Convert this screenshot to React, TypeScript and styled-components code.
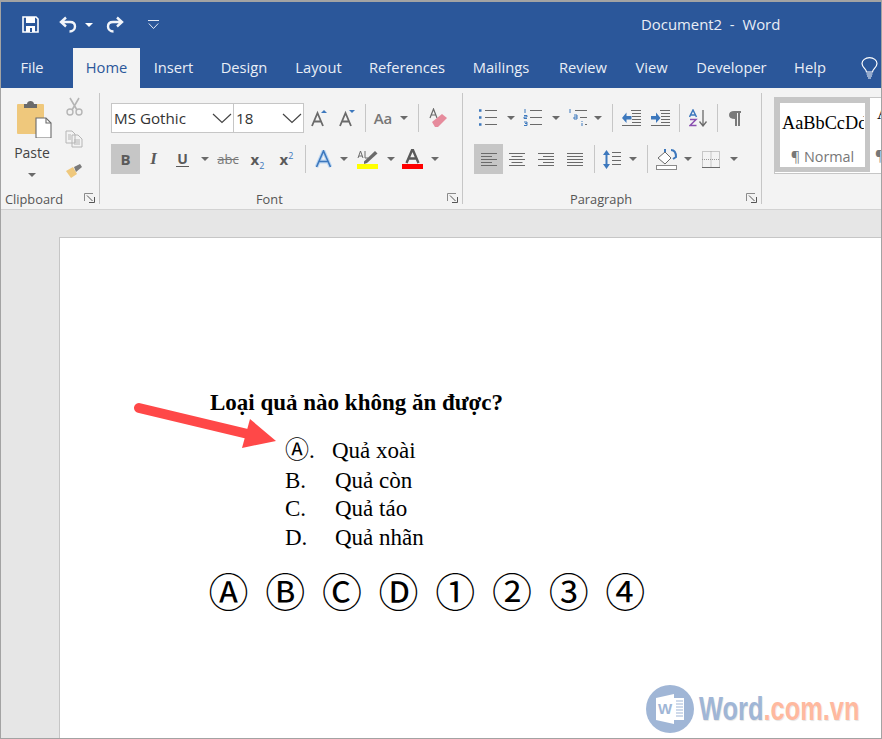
import React from "react";
import styled, { createGlobalStyle } from "styled-components";

const Global = createGlobalStyle`
  html, body { margin: 0; padding: 0; background: #e6e6e6; }
  * { box-sizing: border-box; }
  #root { width: 882px; height: 739px; overflow: hidden; }
`;
const UI = `"Open Sans", "Noto Sans", sans-serif`;

const Window = styled.div`
  width: 882px; height: 739px; display: flex; flex-direction: column;
  border: 1px solid #a3a3a3; border-top-width: 2px; font-family: ${UI}; overflow: hidden; background: #e6e6e6;
`;
const TitleBar = styled.div`
  height: 46px; background: #2b579a; display: flex; align-items: center; color: #fff; padding-left: 21px; flex: none;
`;
const QuickSlot = styled.div<{ $w: number }>`
  width: ${p => p.$w}px; display: flex; align-items: center; height: 20px; margin-top: -1px;
`;
const DocTitle = styled.div`
  margin-left: 482px; font-size: 14.9px; color: #e9eef6; white-space: pre; margin-top: -2px;
`;
const TabBar = styled.div`
  height: 40px; background: #2b579a; display: flex; flex: none;
`;
const Tab = styled.div<{ $active?: boolean; $w: number; $pr?: number }>`
  width: ${p => p.$w}px; height: 40px; display: flex; align-items: center; justify-content: center; font-size: 14.7px; padding: 0 ${p => p.$pr ?? 0}px 3px 0;
  color: ${p => (p.$active ? "#2b579a" : "#e9eef6")};
  background: ${p => (p.$active ? "#f3f3f3" : "transparent")};
`;
const BulbSlot = styled.div`
  margin-left: 19px; width: 24px; display: flex; align-items: center; justify-content: center;
`;
const Ribbon = styled.div`
  height: 122px; background: #f3f3f3; border-bottom: 1px solid #d2d2d2; display: flex; flex: none; overflow: hidden; padding: 5px 0;
`;
const Group = styled.div<{ $w: number; $pl: number; $last?: boolean }>`
  width: ${p => p.$w}px; padding-left: ${p => p.$pl}px; flex: none; display: flex; flex-direction: column; position: relative;
  border-right: ${p => (p.$last ? "none" : "1px solid #c6c6c6")};
`;
const Rows = styled.div`
  height: 95px; padding-top: 10px; display: flex; flex-direction: column; gap: 11px; flex: none;
`;
const Row = styled.div`
  display: flex; height: 30px; align-items: center;
`;
const Slot = styled.div<{ $w: number; $active?: boolean }>`
  width: ${p => p.$w}px; height: 30px; flex: none; display: flex; align-items: center; justify-content: center; color: #5a5a5a;
  background: ${p => (p.$active ? "#c6c6c6" : "transparent")};
`;
const Sep = styled.div`
  width: 1px; height: 28px; background: #c6c6c6; flex: none;
`;
const Caret = styled.i`
  display: block; width: 0; height: 0; border: 4px solid transparent; border-top: 4px solid #6a6a6a; border-bottom: none; flex: none;
`;
const Combo = styled.div<{ $w: number }>`
  width: ${p => p.$w}px; height: 30px; background: #fff; border: 1px solid #c6c6c6; display: flex; align-items: center; justify-content: space-between;
  font-size: 15.2px; color: #333; padding: 0 1px 0 2px; flex: none; margin-right: -1px;
`;
const BoldGlyph = styled.span`
  font: bold 15px ${UI}; color: #5a5a5a;
`;
const ItalicGlyph = styled.span`
  font: italic bold 17px "Liberation Serif", serif; color: #5a5a5a;
`;
const UnderGlyph = styled.span`
  font: bold 14px ${UI}; color: #5a5a5a; border-bottom: 1.5px solid #5a5a5a; line-height: 15px; padding: 0 1px;
`;
const StrikeGlyph = styled.span`
  font: 13px ${UI}; color: #777; text-decoration: line-through;
`;
const ScriptGlyph = styled.span`
  font: bold 15px ${UI}; color: #5a5a5a;
  sub, sup { font-size: 9px; font-weight: 400; color: #3d78bd; line-height: 0; }
`;
const CaseGlyph = styled.span`
  font: 600 15px ${UI}; color: #777;
`;
const Label = styled.div<{ $pl: number }>`
  height: 21px; display: flex; align-items: center; font-size: 12.8px; color: #555; padding-left: ${p => p.$pl}px; flex: none;
`;
const Launcher = styled.span`
  position: absolute; right: 4px; bottom: 1px; display: flex;
`;
const ClipGrid = styled.div`
  height: 95px; display: flex; flex: none;
`;
const PasteCol = styled.div`
  width: 62px; display: flex; flex-direction: column; align-items: center; padding-top: 7px; color: #444; font-size: 14px;
`;
const PasteIconBox = styled.div`
  margin-left: 5px; height: 38px;
`;
const PasteText = styled.div`
  margin-top: 5px; line-height: 20px;
`;
const PasteCaret = styled.div`
  margin-top: 10px;
`;
const SmallCol = styled.div`
  width: 20px; margin-left: 1px; display: flex; flex-direction: column; align-items: center; padding-top: 4px; gap: 14px;
`;
const StyleGallery = styled.div`
  margin-top: 4px; height: 77px; width: 130px; background: #fff; border: 1px solid #c6c6c6; display: flex; border-right: none;
`;
const StyleCard = styled.div`
  width: 95px; height: 74px; border: 5px solid #c6c6c6; background: #fff; overflow: hidden; flex: none; display: flex; flex-direction: column; align-items: center;
`;
const StyleSample = styled.div`
  font: 18.3px "Liberation Serif", serif; color: #000; white-space: nowrap; height: 45px; line-height: 40px; width: 83px; overflow: hidden; padding-left: 1px;
`;
const StyleName = styled.div`
  font-size: 14.4px; color: #777; white-space: nowrap; line-height: 18px;
`;
const NextStyle = styled.div`
  padding: 6px 0 0 7px; display: flex; flex-direction: column; font-family: "Liberation Serif", serif; font-size: 17px; color: #000; overflow: hidden; width: 30px;
`;
const NextMark = styled.div`
  color: #777; font: 14px ${UI}; margin-top: 22px; margin-left: -2px;
`;
const DocArea = styled.div`
  flex: 1; min-height: 0; padding: 27px 0 0 58px; background: #e6e6e6;
`;
const Page = styled.div`
  height: 100%; background: #fff; border: 1px solid #c6c6c6; border-right: none; border-bottom: none; position: relative; padding: 150px 0 0 150px;
  font-family: "Liberation Serif", serif; color: #000;
`;
const Question = styled.div`
  font-weight: 700; font-size: 23px; line-height: 30px; height: 47px; white-space: nowrap;
`;
const Options = styled.div`
  margin-left: 75px; font-size: 23px; display: flex; flex-direction: column;
`;
const Option = styled.div<{ $h: number }>`
  height: ${p => p.$h}px; line-height: ${p => p.$h}px; display: flex; white-space: nowrap;
`;
const OptLabel = styled.span<{ $w: number }>`
  width: ${p => p.$w}px; flex: none;
`;
const Circled = styled.span`
  font-family: "Noto Sans CJK JP", sans-serif; font-size: 24px; line-height: 24px;
`;
const Symbols = styled.div`
  margin-top: 18px; display: flex; gap: 19.7px; font-family: "Noto Sans CJK JP", sans-serif; font-size: 40px; line-height: 40px;
`;
const Symbol = styled.span`
  width: 37px; display: flex; justify-content: center; flex: none;
`;
const ArrowSvg = styled.svg`
  position: absolute; left: 73px; top: 162px;
`;
const Watermark = styled.div`
  position: absolute; right: 22px; bottom: 5px; display: flex; align-items: center; gap: 5px;
`;
const Brand = styled.div`
  font: bold 33px "Liberation Sans", sans-serif; white-space: nowrap; transform: scaleX(.77); transform-origin: left center; width: 160px; text-shadow: 1px 1px 1px #e4e4e4;
`;
const BrandBlue = styled.span`
  color: #a0b6d6;
`;
const BrandOrange = styled.span`
  color: #ffb99f;
`;

const Save = () => (
  <svg width="17" height="17" viewBox="0 0 17 17"><path d="M1 1h13l2 2v13H1z" fill="none" stroke="#fff" strokeWidth="1.6" /><rect x="4" y="1" width="9" height="6" fill="#fff" /><rect x="4" y="10" width="9" height="6" fill="#fff" /><rect x="8" y="12" width="2" height="4" fill="#2b579a" /></svg>
);
const Undo = ({ flip }: { flip?: boolean }) => (
  <svg width="18" height="17" viewBox="0 0 18 17" style={flip ? { transform: "scaleX(-1)" } : undefined}><path d="M7 1.500 2 6l5 4.500M2.500 6H11c3.500 0 5 2 5 4.500S14 15.500 10.500 15.500" fill="none" stroke="#f2f5fa" strokeWidth="2.400" /></svg>
);
const QuickCaret = () => <svg width="8" height="4" viewBox="0 0 8 4"><path d="M0 0h8L4 4z" fill="#fff" /></svg>;
const Customize = () => (
  <svg width="11" height="9" viewBox="0 0 11 9"><path d="M0 .5h11M.8 3.500l4.700 5 4.700-5" fill="none" stroke="#e3e9f3" strokeWidth="1" /></svg>
);
const Bulb = () => (
  <svg width="17" height="22" viewBox="0 0 17 22"><path d="M5.500 15c0-3-4.500-4.500-4.500-8.500a7.500 5.800 0 0 1 15 0c0 4-4.500 5.500-4.500 8.500z" fill="none" stroke="#fff" strokeWidth="1.200" /><path d="M5.500 17h6M6 19h5M7 21h3" stroke="#fff" strokeWidth="1.200" /></svg>
);
const PasteIcon = () => (
  <svg width="35" height="38" viewBox="0 0 35 38">
    <rect x="0" y="4" width="27" height="30" rx="1" fill="#efc87c" />
    <path d="M7 4h3c0-4 7-4 7 0h3v4H7z" fill="#6a6a6a" />
    <path d="M19 18h10l5 5v15H19z" fill="#fff" stroke="#6a6a6a" strokeWidth="1.100" />
    <path d="M29 18v5h5" fill="none" stroke="#6a6a6a" strokeWidth="1.100" />
  </svg>
);
const Cut = () => (
  <svg width="17" height="19" viewBox="0 0 17 19"><path d="M4 1l7 12M13 1L6 13" stroke="#b5b5b5" strokeWidth="1.600" fill="none" /><circle cx="4" cy="15" r="3" fill="none" stroke="#b5b5b5" strokeWidth="1.400" /><circle cx="13" cy="15" r="3" fill="none" stroke="#b5b5b5" strokeWidth="1.400" /></svg>
);
const Copy = () => (
  <svg width="18" height="18" viewBox="0 0 18 18"><path d="M1 1h6l3 3v9H1zM7 5h6l4 4v8H7z" fill="#f3f3f3" stroke="#b5b5b5" /><path d="M3 5h3M3 7h3M3 9h3M9 10h6M9 12h6M9 14h6" stroke="#b5b5b5" /></svg>
);
const Painter = () => (
  <svg width="19" height="17" viewBox="0 0 19 17"><path d="M1 9l7-4 4 7-6 4z" fill="#efc87c" /><path d="M9 5l6-3 2 3-6 5z" fill="#7a7a7a" /></svg>
);
const Launch = () => (
  <svg width="11" height="10" viewBox="0 0 11 10"><path d="M.5 8V.5H9" fill="none" stroke="#8a8a8a" /><path d="M3 2.500l5.500 5.500M5 9.500h5.500V4" fill="none" stroke="#555" /></svg>
);
const Chevron = () => (
  <svg width="20" height="11" viewBox="0 0 20 11"><path d="M1 1l9 8.500L19 1" fill="none" stroke="#444" strokeWidth="1.200" /></svg>
);
const SizeA = ({ down }: { down?: boolean }) => (
  <svg width="17" height="18" viewBox="0 0 17 18"><path d="M1 17 6.500 4 12 17M3 12.500h7" fill="none" stroke="#6a6a6a" strokeWidth="1.800" />{down ? <path d="M10 1h6l-3 3z" fill="#3d78bd" /> : <path d="M10 4h6l-3-3z" fill="#3d78bd" />}</svg>
);
const Eraser = () => (
  <svg width="19" height="20" viewBox="0 0 19 20"><path d="M1 10 4.500 1 8 10M2.500 7h4" fill="none" stroke="#6a6a6a" strokeWidth="1.200" /><path d="M3 14l10-8 5 4-9 9H6z" fill="#e68b9c" /></svg>
);
const TextEffect = () => (
  <svg width="17" height="18" viewBox="0 0 17 18"><path d="M1.500 17 8.500 1l7 16M4.500 11.500h8" fill="none" stroke="#bcd6f2" strokeWidth="3.800" /><path d="M1.500 17 8.500 1l7 16M4.500 11.500h8" fill="none" stroke="#3d78bd" strokeWidth="1.600" /></svg>
);
const Highlight = () => (
  <svg width="21" height="20" viewBox="0 0 21 20"><path d="M1 9 3.500 2 6 9M2 7h3" fill="none" stroke="#6a6a6a" strokeWidth="1" /><path d="M8 2v7h3" fill="none" stroke="#6a6a6a" /><path d="M7 12.500 18 2l2.500 2.500L10 14l-3 1z" fill="#6a6a6a" /><rect x="0" y="15" width="21" height="5" fill="#ffff00" /></svg>
);
const FontColor = () => (
  <svg width="21" height="20" viewBox="0 0 21 20"><path d="M4.500 14 10.500 0 16.500 14M6.500 9.500h8" fill="none" stroke="#5a5a5a" strokeWidth="2.400" /><rect x="0" y="15" width="21" height="5" fill="#ff0000" /></svg>
);
const ListIcon = ({ kind }: { kind: "bullet" | "num" | "multi" }) => (
  <svg width="20" height="18" viewBox="0 0 20 18">
    {kind === "bullet" && <path d="M1 1.500h2.500M1 8.500h2.500M1 15.500h2.500" stroke="#3d78bd" strokeWidth="2.500" />}
    {kind === "num" && <path d="M2 0v4M1 6.500h3v1.500H1v1.500h3M1 13h3v1.500H2 4V16.500H1" stroke="#3d78bd" strokeWidth="1" fill="none" />}
    {kind === "multi" && <path d="M2 0v4M6 6h3v4H6v-2h3M14 12v1M14 14v3" stroke="#3d78bd" strokeWidth="1" fill="none" />}
    {kind === "multi" ? <path d="M7 1.500h12M12 8.500h7M17 15.500h2" stroke="#6a6a6a" /> : <path d="M7 1.500h12M7 8.500h12M7 15.500h12" stroke="#6a6a6a" />}
  </svg>
);
const Indent = ({ inc }: { inc?: boolean }) => (
  <svg width="19" height="16" viewBox="0 0 19 16"><path d="M9 .5h10M10 3.500h9M10 6.500h9M10 9.500h9M10 12.500h9M0 15.500h19" stroke="#6a6a6a" /><path d={inc ? "M0 6h5V2.500L9.500 8 5 13V9.500H0z" : "M9.500 6h-5V2.500L0 8l4.500 5V9.500h5z"} fill="#3d78bd" /></svg>
);
const Sort = () => (
  <svg width="19" height="18" viewBox="0 0 19 18"><path d="M.5 8 4 1l3.500 7M2 6h4" fill="none" stroke="#3d78bd" strokeWidth="1.500" /><path d="M1 10.500h6L1 16.500h6.500" fill="none" stroke="#8a4fb0" strokeWidth="1.500" /><path d="M14 1v15M10.500 12.500 14 17l3.500-4.500" fill="none" stroke="#6a6a6a" strokeWidth="1.300" /></svg>
);
const Pilcrow = () => (
  <svg width="12" height="15" viewBox="0 0 12 15"><path d="M5 0h7v2h-1v13H9V2H8v13H6V8C2 8 0 6.500 0 4s2-4 5-4z" fill="#7a7a7a" /></svg>
);
const Align = ({ mode }: { mode: "left" | "center" | "right" | "justify" }) => {
  const short = mode === "justify" ? 16 : 11;
  const x = (w: number) => (mode === "center" ? (16 - w) / 2 : mode === "right" ? 16 - w : 0);
  return (
    <svg width="16" height="13" viewBox="0 0 16 13">
      {[0, 1, 2, 3, 4].map(i => {
        const w = i % 2 === 0 ? 16 : short;
        return <path key={i} d={`M${x(w)} ${i * 3 + 0.5}h${w}`} stroke="#6a6a6a" />;
      })}
    </svg>
  );
};
const LineSpacing = () => (
  <svg width="18" height="19" viewBox="0 0 18 19"><path d="M3.500 3v13" stroke="#3d78bd" strokeWidth="2" /><path d="M0 5 3.500 0 7 5zM0 14l3.500 5L7 14z" fill="#3d78bd" /><path d="M9 2.500h9M9 6.500h9M9 10.500h9M9 14.500h9" stroke="#6a6a6a" /></svg>
);
const Shading = () => (
  <svg width="22" height="21" viewBox="0 0 22 21"><path d="M2 9 9 3l6 6-6 6z" fill="#fff" stroke="#6a6a6a" /><path d="M9 3V0M15 1c4 0 5 3 5 7l-3 2" fill="none" stroke="#3d78bd" strokeWidth="2" /><rect x=".5" y="16.500" width="20" height="4" fill="#fff" stroke="#8a8a8a" /></svg>
);
const Borders = () => (
  <svg width="18" height="17" viewBox="0 0 18 17"><path d="M.5.500h17v16H.500z" fill="none" stroke="#9a9a9a" strokeDasharray="1 1" /><path d="M9 .500v16M0 8.500h18" stroke="#9a9a9a" strokeDasharray="1 1" /><path d="M0 16.500h18" stroke="#6a6a6a" /></svg>
);
const Arrow = () => (
  <ArrowSvg width="149" height="52" viewBox="0 0 149 52">
    <path d="M6 8 119 35" stroke="#ff4848" strokeWidth="10" strokeLinecap="round" />
    <path d="M143 41 117 19 109 48z" fill="#ff4848" />
  </ArrowSvg>
);
const Logo = () => (
  <svg width="48" height="48" viewBox="0 0 48 48">
    <circle cx="24" cy="24" r="24" fill="#a0b6d6" />
    <path d="M10 13 28 9v30l-18-4z" fill="#fff" />
    <path d="M28 13h10v22H28z" fill="#fff" />
    <path d="M30 16h7M30 19h7M30 22h7M30 25h7M30 28h7M30 31h7" stroke="#a0b6d6" strokeWidth="1.200" />
    <text x="19" y="29" textAnchor="middle" fontFamily="Liberation Sans, sans-serif" fontSize="15" fontWeight="700" fill="#a0b6d6">W</text>
  </svg>
);

const tabs: [string, number][] = [["Home", 67], ["Insert", 67], ["Design", 74], ["Layout", 75], ["References", 102], ["Mailings", 86], ["Review", 78], ["View", 59], ["Developer", 101], ["Help", 56]];

export default function App() {
  return (
    <Window>
      <Global />
      <TitleBar>
        <QuickSlot $w={37}><Save /></QuickSlot>
        <QuickSlot $w={26}><Undo /></QuickSlot>
        <QuickSlot $w={21}><QuickCaret /></QuickSlot>
        <QuickSlot $w={42}><Undo flip /></QuickSlot>
        <QuickSlot $w={11}><Customize /></QuickSlot>
        <DocTitle>Document2  -  Word</DocTitle>
      </TitleBar>
      <TabBar>
        <Tab $w={72} $pr={10}>File</Tab>
        {tabs.map(([name, w]) => (
          <Tab key={name} $w={w} $active={name === "Home"}>{name}</Tab>
        ))}
        <BulbSlot><Bulb /></BulbSlot>
      </TabBar>
      <Ribbon>
        <Group $w={99} $pl={0}>
          <ClipGrid>
            <PasteCol>
              <PasteIconBox><PasteIcon /></PasteIconBox>
              <PasteText>Paste</PasteText>
              <PasteCaret><Caret /></PasteCaret>
            </PasteCol>
            <SmallCol>
              <Cut />
              <Copy />
              <Painter />
            </SmallCol>
          </ClipGrid>
          <Label $pl={4}>Clipboard</Label>
          <Launcher><Launch /></Launcher>
        </Group>
        <Group $w={363} $pl={11}>
          <Rows>
            <Row>
              <Combo $w={123}>MS Gothic<Chevron /></Combo>
              <Combo $w={71}>18<Chevron /></Combo>
              <Slot $w={33}><SizeA /></Slot>
              <Slot $w={23}><SizeA down /></Slot>
              <Slot $w={6} />
              <Sep />
              <Slot $w={34}><CaseGlyph>Aa</CaseGlyph></Slot>
              <Slot $w={8}><Caret /></Slot>
              <Slot $w={10} />
              <Sep />
              <Slot $w={38}><Eraser /></Slot>
            </Row>
            <Row>
              <Slot $w={29} $active><BoldGlyph>B</BoldGlyph></Slot>
              <Slot $w={27}><ItalicGlyph>I</ItalicGlyph></Slot>
              <Slot $w={31}><UnderGlyph>U</UnderGlyph></Slot>
              <Slot $w={14}><Caret /></Slot>
              <Slot $w={32}><StrikeGlyph>abc</StrikeGlyph></Slot>
              <Slot $w={27}><ScriptGlyph>x<sub>2</sub></ScriptGlyph></Slot>
              <Slot $w={31}><ScriptGlyph>x<sup>2</sup></ScriptGlyph></Slot>
              <Slot $w={3} />
              <Sep />
              <Slot $w={34}><TextEffect /></Slot>
              <Slot $w={7}><Caret /></Slot>
              <Slot $w={41}><Highlight /></Slot>
              <Slot $w={5}><Caret /></Slot>
              <Slot $w={38}><FontColor /></Slot>
              <Slot $w={7}><Caret /></Slot>
            </Row>
          </Rows>
          <Label $pl={145}>Font</Label>
          <Launcher><Launch /></Launcher>
        </Group>
        <Group $w={299} $pl={11}>
          <Rows>
            <Row>
              <Slot $w={27}><ListIcon kind="bullet" /></Slot>
              <Slot $w={19}><Caret /></Slot>
              <Slot $w={25}><ListIcon kind="num" /></Slot>
              <Slot $w={21}><Caret /></Slot>
              <Slot $w={23}><ListIcon kind="multi" /></Slot>
              <Slot $w={17}><Caret /></Slot>
              <Slot $w={6} />
              <Sep />
              <Slot $w={36}><Indent /></Slot>
              <Slot $w={22}><Indent inc /></Slot>
              <Slot $w={8} />
              <Sep />
              <Slot $w={37}><Sort /></Slot>
              <Sep />
              <Slot $w={34}><Pilcrow /></Slot>
            </Row>
            <Row>
              <Slot $w={29} $active><Align mode="left" /></Slot>
              <Slot $w={28}><Align mode="center" /></Slot>
              <Slot $w={30}><Align mode="right" /></Slot>
              <Slot $w={28}><Align mode="justify" /></Slot>
              <Slot $w={5} />
              <Sep />
              <Slot $w={34}><LineSpacing /></Slot>
              <Slot $w={7}><Caret /></Slot>
              <Slot $w={11} />
              <Sep />
              <Slot $w={37}><Shading /></Slot>
              <Slot $w={5}><Caret /></Slot>
              <Slot $w={41}><Borders /></Slot>
              <Slot $w={5}><Caret /></Slot>
            </Row>
          </Rows>
          <Label $pl={96}>Paragraph</Label>
          <Launcher><Launch /></Launcher>
        </Group>
        <Group $w={120} $pl={12} $last>
          <StyleGallery>
            <StyleCard>
              <StyleSample>AaBbCcDdEe</StyleSample>
              <StyleName>¶ Normal</StyleName>
            </StyleCard>
            <NextStyle>
              <span>A</span>
              <NextMark>¶</NextMark>
            </NextStyle>
          </StyleGallery>
        </Group>
      </Ribbon>
      <DocArea>
        <Page>
          <Question>Loại quả nào không ăn được?</Question>
          <Options>
            <Option $h={31}><OptLabel $w={47}><Circled>Ⓐ</Circled>.</OptLabel>Quả xoài</Option>
            <Option $h={29}><OptLabel $w={50}>B.</OptLabel>Quả còn</Option>
            <Option $h={28}><OptLabel $w={50}>C.</OptLabel>Quả táo</Option>
            <Option $h={29}><OptLabel $w={50}>D.</OptLabel>Quả nhãn</Option>
          </Options>
          <Symbols>
            {["Ⓐ", "Ⓑ", "Ⓒ", "Ⓓ", "①", "②", "③", "④"].map(s => <Symbol key={s}>{s}</Symbol>)}
          </Symbols>
          <Arrow />
          <Watermark>
            <Logo />
            <Brand><BrandBlue>Word</BrandBlue><BrandOrange>.com.vn</BrandOrange></Brand>
          </Watermark>
        </Page>
      </DocArea>
    </Window>
  );
}
